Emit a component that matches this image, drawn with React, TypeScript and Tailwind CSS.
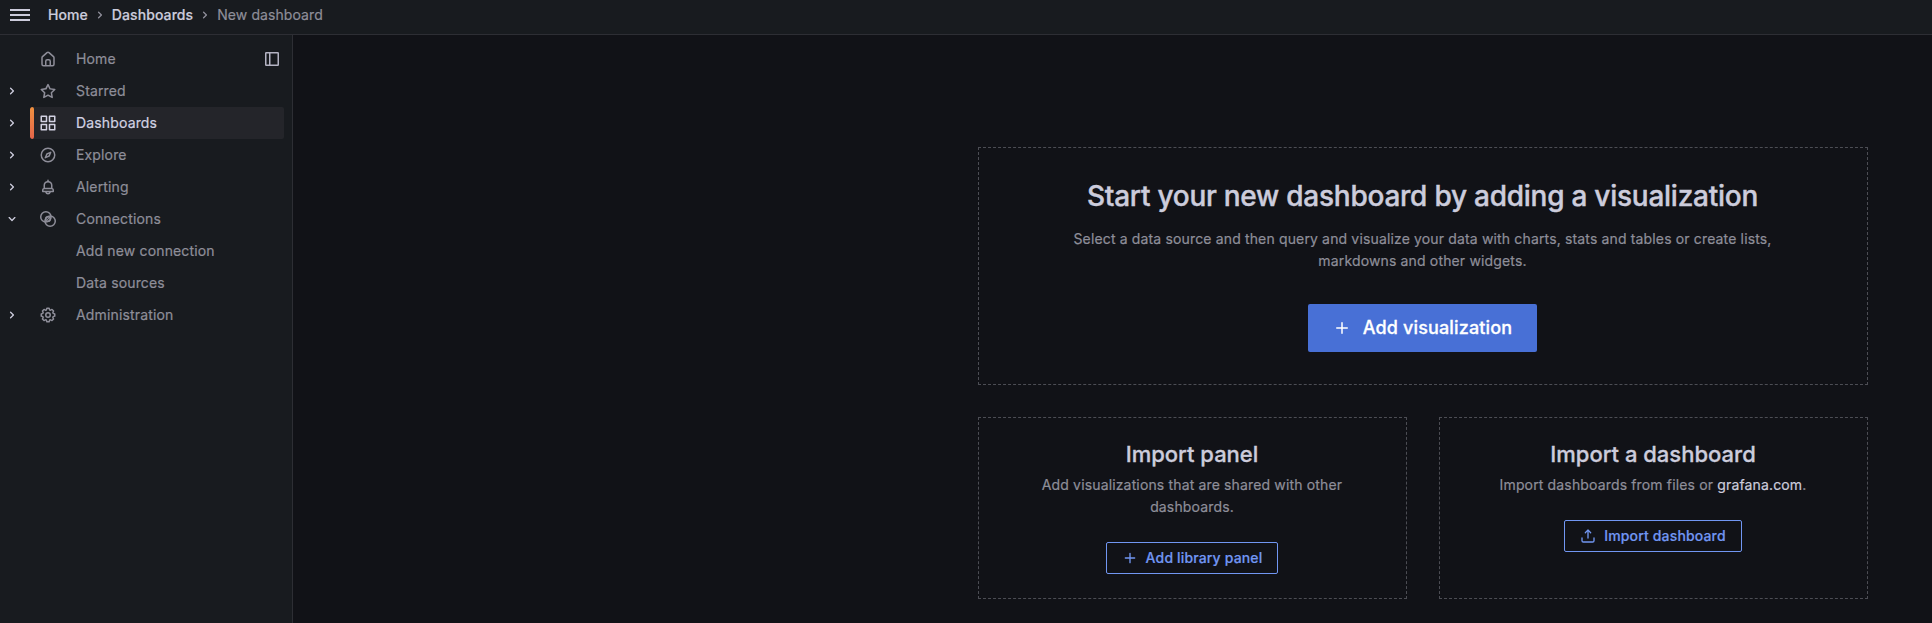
import React from 'react';

const paths = {
  home: 'M20,8h0L14,2.74a3,3,0,0,0-4,0L4,8a3,3,0,0,0-1,2.26V19a3,3,0,0,0,3,3H18a3,3,0,0,0,3-3V10.25A3,3,0,0,0,20,8ZM14,20H10V15a1,1,0,0,1,1-1h2a1,1,0,0,1,1,1Zm5-1a1,1,0,0,1-1,1H16V15a3,3,0,0,0-3-3H11a3,3,0,0,0-3,3v5H6a1,1,0,0,1-1-1V10.25a1,1,0,0,1,.34-.75l6-5.25a1,1,0,0,1,1.32,0l6,5.25a1,1,0,0,1,.34.75Z',
  star: 'M22,9.67A1,1,0,0,0,21.14,9l-5.69-.83L12.9,3a1,1,0,0,0-1.8,0L8.55,8.16,2.86,9a1,1,0,0,0-.81.68,1,1,0,0,0,.25,1l4.13,4-1,5.68A1,1,0,0,0,6.9,21.44L12,18.77l5.1,2.67a.93.93,0,0,0,.46.12,1,1,0,0,0,.59-.19,1,1,0,0,0,.4-1l-1-5.68,4.13-4A1,1,0,0,0,22,9.67Zm-6.15,4a1,1,0,0,0-.29.88l.72,4.2-3.76-2a1.06,1.06,0,0,0-.94,0l-3.76,2,.72-4.2a1,1,0,0,0-.29-.88l-3-3,4.21-.61a1,1,0,0,0,.76-.55L12,5.7l1.88,3.82a1,1,0,0,0,.76.55l4.21.61Z',
  apps: 'M10,13H3a1,1,0,0,0-1,1v7a1,1,0,0,0,1,1h7a1,1,0,0,0,1-1V14A1,1,0,0,0,10,13ZM9,20H4V15H9ZM21,2H14a1,1,0,0,0-1,1v7a1,1,0,0,0,1,1h7a1,1,0,0,0,1-1V3A1,1,0,0,0,21,2ZM20,9H15V4h5Zm1,4H14a1,1,0,0,0-1,1v7a1,1,0,0,0,1,1h7a1,1,0,0,0,1-1V14A1,1,0,0,0,21,13Zm-1,7H15V15h5ZM10,2H3A1,1,0,0,0,2,3v7a1,1,0,0,0,1,1h7a1,1,0,0,0,1-1V3A1,1,0,0,0,10,2ZM9,9H4V4H9Z',
  compass: 'M12,2A10,10,0,1,0,22,12,10,10,0,0,0,12,2Zm0,18a8,8,0,1,1,8-8A8,8,0,0,1,12,20ZM15.14,7.55l-5,2.12a1,1,0,0,0-.52.52l-2.12,5a1,1,0,0,0,.21,1.1,1,1,0,0,0,.7.29.93.93,0,0,0,.4-.09l5-2.12a1,1,0,0,0,.52-.52l2.12-5a1,1,0,0,0-1.31-1.3Zm-2.49,5.1-2.28,1,1-2.28,2.28-1Z',
  bell: 'M18,13.18V10a6,6,0,0,0-5-5.91V3a1,1,0,0,0-2,0V4.09A6,6,0,0,0,6,10v3.18A3,3,0,0,0,4,16v2a1,1,0,0,0,1,1H8.14a4,4,0,0,0,7.72,0H19a1,1,0,0,0,1-1V16A3,3,0,0,0,18,13.18ZM8,10a4,4,0,0,1,8,0v3H8Zm4,10a2,2,0,0,1-1.72-1h3.44A2,2,0,0,1,12,20Zm6-3H6V16a1,1,0,0,1,1-1H17a1,1,0,0,1,1,1Z',
  cog: 'M21.32,9.55l-1.89-.63.89-1.78A1,1,0,0,0,20.13,6L18,3.87a1,1,0,0,0-1.15-.19l-1.78.89-.63-1.89A1,1,0,0,0,13.5,2h-3a1,1,0,0,0-.95.68L8.92,4.57,7.14,3.68A1,1,0,0,0,6,3.87L3.87,6a1,1,0,0,0-.19,1.15l.89,1.78-1.89.63A1,1,0,0,0,2,10.5v3a1,1,0,0,0,.68.95l1.89.63-.89,1.78A1,1,0,0,0,3.87,18L6,20.13a1,1,0,0,0,1.15.19l1.78-.89.63,1.89a1,1,0,0,0,.95.68h3a1,1,0,0,0,.95-.68l.63-1.89,1.78.89A1,1,0,0,0,18,20.13L20.13,18a1,1,0,0,0,.19-1.15l-.89-1.78,1.89-.63A1,1,0,0,0,22,13.5v-3A1,1,0,0,0,21.32,9.55ZM20,12.78l-1.2.4A2,2,0,0,0,17.64,16l.57,1.14-1.1,1.1L16,17.64a2,2,0,0,0-2.79,1.16l-.4,1.2H11.22l-.4-1.2A2,2,0,0,0,8,17.64l-1.14.57-1.1-1.1L6.36,16A2,2,0,0,0,5.2,13.18L4,12.78V11.22l1.2-.4A2,2,0,0,0,6.36,8L5.79,6.89l1.1-1.1L8,6.36A2,2,0,0,0,10.82,5.2l.4-1.2h1.56l.4,1.2A2,2,0,0,0,16,6.36l1.14-.57,1.1,1.1L17.64,8a2,2,0,0,0,1.16,2.79l1.2.4ZM12,8a4,4,0,1,0,4,4A4,4,0,0,0,12,8Zm0,6a2,2,0,1,1,2-2A2,2,0,0,1,12,14Z',
  upload: 'M8.71,7.71,11,5.41V15a1,1,0,0,0,2,0V5.41l2.29,2.3a1,1,0,0,0,1.42,0,1,1,0,0,0,0-1.42l-4-4a1,1,0,0,0-.33-.21,1,1,0,0,0-.76,0,1,1,0,0,0-.33.21l-4,4A1,1,0,1,0,8.71,7.71ZM21,14a1,1,0,0,0-1,1v4a1,1,0,0,1-1,1H5a1,1,0,0,1-1-1V15a1,1,0,0,0-2,0v4a3,3,0,0,0,3,3H19a3,3,0,0,0,3-3V15A1,1,0,0,0,21,14Z',
  plus: 'M19,11H13V5a1,1,0,0,0-2,0v6H5a1,1,0,0,0,0,2h6v6a1,1,0,0,0,2,0V13h6a1,1,0,0,0,0-2Z',
  right: 'M14.83,11.29,10.59,7.05a1,1,0,0,0-1.42,0,1,1,0,0,0,0,1.41L12.71,12,9.17,15.54a1,1,0,0,0,0,1.41,1,1,0,0,0,.71.29,1,1,0,0,0,.71-.29l4.24-4.24A1,1,0,0,0,14.83,11.29Z',
  down: 'M17,9.17a1,1,0,0,0-1.41,0L12,12.71,8.46,9.17a1,1,0,0,0-1.41,0,1,1,0,0,0,0,1.42l4.24,4.24a1,1,0,0,0,1.42,0L17,10.59A1,1,0,0,0,17,9.17Z',
};

type IconName = keyof typeof paths | 'connections';

function Icon({ name, className }: { name: IconName; className: string }) {
  if (name === 'connections') {
    return (
      <svg viewBox="0 0 24 24" fill="none" stroke="currentColor" strokeWidth="2" className={className}>
        <circle cx="9.2" cy="9.2" r="6.9" />
        <circle cx="14.8" cy="14.8" r="6.9" />
        <circle cx="12" cy="12" r="3.1" />
        <path d="M10.4 13.6l3.2-3.2" strokeWidth="1.4" />
      </svg>
    );
  }
  return (
    <svg viewBox="0 0 24 24" fill="currentColor" className={className}>
      <path d={paths[name]} />
    </svg>
  );
}

interface Item {
  label: string;
  icon?: IconName;
  toggle?: 'right' | 'down';
  active?: boolean;
  dock?: boolean;
}

const items: Item[] = [
  { label: 'Home', icon: 'home', dock: true },
  { label: 'Starred', icon: 'star', toggle: 'right' },
  { label: 'Dashboards', icon: 'apps', toggle: 'right', active: true },
  { label: 'Explore', icon: 'compass', toggle: 'right' },
  { label: 'Alerting', icon: 'bell', toggle: 'right' },
  { label: 'Connections', icon: 'connections', toggle: 'down' },
  { label: 'Add new connection' },
  { label: 'Data sources' },
  { label: 'Administration', icon: 'cog', toggle: 'right' },
];

function NavRow({ item }: { item: Item }) {
  return (
    <li className="flex h-8 items-center pr-2">
      <span className="flex w-[30px] shrink-0 items-center pl-1 text-[#ccccdc]">
        {item.toggle && <Icon name={item.toggle} className="size-4" />}
      </span>
      <a
        className={
          item.active
            ? 'flex h-8 grow items-center overflow-hidden rounded-[2px] bg-[#24252a] text-[#d2d2e2] [-webkit-text-stroke:0.2px]'
            : 'flex h-8 grow items-center text-[#8e8e99] [-webkit-text-stroke:0.2px]'
        }
      >
        <span
          className={
            item.active
              ? 'h-8 w-1 shrink-0 rounded-[2px] bg-linear-to-b from-[#f0913f] to-[#e5654a]'
              : 'w-1 shrink-0'
          }
        />
        <span className="flex w-[42px] shrink-0 pl-[5px]">
          {item.icon && <Icon name={item.icon} className="size-[18px]" />}
        </span>
        <span className="grow">{item.label}</span>
        {item.dock && (
          <svg viewBox="0 0 16 16" fill="none" stroke="currentColor" strokeWidth="1.5" className="mr-1 size-4 text-[#b4b4c3]">
            <rect x="1.75" y="1.75" width="12.5" height="12.5" rx="0.5" />
            <path d="M5.75 2v12" />
          </svg>
        )}
      </a>
    </li>
  );
}

function OutlineButton({ icon, label, width }: { icon: IconName; label: string; width: string }) {
  return (
    <button className={`flex h-8 items-center justify-center gap-2 rounded-[2px] border border-[#7196f2] font-medium whitespace-nowrap text-[#7196f2] ${width}`}>
      <Icon name={icon} className="size-4" />
      {label}
    </button>
  );
}

export default function App() {
  return (
    <div className="flex h-[623px] w-[1932px] flex-col overflow-hidden bg-[#111217] font-['Inter',sans-serif] text-sm leading-[22px] tracking-[0.15px] text-[#ccccdc] [-webkit-text-stroke:0.2px]">
      <header className="flex h-[35px] shrink-0 items-start border-b border-[#2d2e34] bg-[#181b1f] pt-1 pl-[10px]">
        <div className="mt-[5px] flex w-[38px] flex-col gap-[3px]">
          <span className="h-[2px] w-5 bg-[#ccccdc]" />
          <span className="h-[2px] w-5 bg-[#ccccdc]" />
          <span className="h-[2px] w-5 bg-[#ccccdc]" />
        </div>
        <nav className="flex items-center gap-1 font-medium tracking-[0.08px]">
          <span>Home</span>
          <Icon name="right" className="size-4 text-[#8e8e99]" />
          <span>Dashboards</span>
          <Icon name="right" className="size-4 text-[#8e8e99]" />
          <span className="font-normal text-[#8e8e99]">New dashboard</span>
        </nav>
      </header>
      <div className="flex grow">
        <aside className="w-[293px] shrink-0 border-r border-[#2d2e34] bg-[#181b1f] pt-2">
          <ul>
            {items.map((item) => (
              <NavRow key={item.label} item={item} />
            ))}
          </ul>
        </aside>
        <main className="flex grow flex-col items-end gap-8 pt-28 pr-16">
          <section className="flex h-[238px] w-[890px] flex-col items-center border border-dashed border-[#4c4d54] pt-8 pr-px text-center">
            <h1 className="text-[28px] leading-8 font-medium tracking-[-0.25px] [-webkit-text-stroke:0.4px]">
              Start your new dashboard by adding a visualization
            </h1>
            <p className="mt-4 w-[720px] text-[#8e8e99]">
              Select a data source and then query and visualize your data with charts, stats and tables or create lists, markdowns and other widgets.
            </p>
            <button className="mt-8 flex h-12 w-[229px] items-center justify-center gap-3 rounded-[2px] bg-[#4870d6] text-lg font-medium whitespace-nowrap text-white [-webkit-text-stroke:0.3px]">
              <Icon name="plus" className="size-[18px]" />
              Add visualization
            </button>
          </section>
          <div className="flex gap-8">
            <section className="flex h-[182px] w-[429px] flex-col items-center border border-dashed border-[#4c4d54] pt-6 pr-px text-center">
              <h3 className="text-[22px] leading-6 font-medium tracking-normal [-webkit-text-stroke:0.3px]">Import panel</h3>
              <p className="mt-2 w-[330px] text-[#8e8e99]">Add visualizations that are shared with other dashboards.</p>
              <div className="mt-6">
                <OutlineButton icon="plus" label="Add library panel" width="w-[172px]" />
              </div>
            </section>
            <section className="flex h-[182px] w-[429px] flex-col items-center border border-dashed border-[#4c4d54] pt-6 pr-px text-center">
              <h3 className="text-[22px] leading-6 font-medium tracking-normal [-webkit-text-stroke:0.3px]">Import a dashboard</h3>
              <p className="mt-2 text-[#8e8e99]">
                Import dashboards from files or <a className="text-[#ccccdc]">grafana.com</a>.
              </p>
              <div className="mt-6">
                <OutlineButton icon="upload" label="Import dashboard" width="w-[178px]" />
              </div>
            </section>
          </div>
        </main>
      </div>
    </div>
  );
}
